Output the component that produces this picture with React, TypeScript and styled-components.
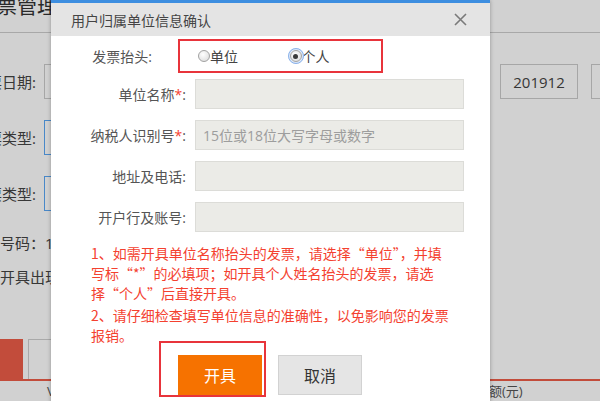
import React from 'react';
import styled, { createGlobalStyle } from 'styled-components';

const GlobalStyle = createGlobalStyle`
  html, body {
    margin: 0;
    padding: 0;
  }
  body {
    width: 600px;
    height: 401px;
    overflow: hidden;
    background: #fff;
    font-family: "Open Sans", "Noto Sans CJK SC", sans-serif;
  }
`;

const Screen = styled.div`
  position: relative;
  width: 600px;
  height: 401px;
  overflow: hidden;
  background: #fff;
`;

/* ---------- page behind the dialog ---------- */

const Page = styled.div`
  color: #444;
  font-size: 15px;
`;

const PageHeader = styled.div`
  height: 32px;
  border-bottom: 1px solid #cdcdcd;
  overflow: hidden;
`;

const PageTitle = styled.h1`
  margin: -6px 0 0 -23px;
  font-size: 20px;
  font-weight: normal;
  line-height: 26px;
  color: #333;
  white-space: nowrap;
`;

const FilterRow = styled.div<{ $top: number }>`
  display: flex;
  align-items: center;
  height: 35px;
  margin: ${(p) => p.$top}px 0 0 -100px;
`;

const FilterLabel = styled.span`
  flex: none;
  width: 136px;
  padding-right: 8px;
  text-align: right;
  white-space: nowrap;
`;

const FieldBox = styled.div<{ $width: number; $offset?: number; $accent?: boolean }>`
  flex: none;
  box-sizing: border-box;
  width: ${(p) => p.$width}px;
  height: 35px;
  margin-left: ${(p) => p.$offset ?? 0}px;
  border: 1px solid ${(p) => (p.$accent ? '#5aa6f5' : '#cbcbcb')};
  display: flex;
  align-items: center;
  justify-content: center;
  color: #444;
`;

const InfoLine = styled.div<{ $top: number; $shift: number }>`
  margin: ${(p) => p.$top}px 0 0 ${(p) => p.$shift}px;
  line-height: 20px;
  white-space: nowrap;
`;

const TabBar = styled.div`
  display: flex;
  align-items: flex-end;
  gap: 5px;
  height: 40px;
  margin-top: 52px;
  border-bottom: 2px solid #ed5d48;
`;

const Tab = styled.div<{ $active?: boolean; $width: number }>`
  box-sizing: border-box;
  width: ${(p) => p.$width}px;
  height: 40px;
  background: ${(p) => (p.$active ? '#ed5d48' : '#fff')};
  border: 1px solid ${(p) => (p.$active ? '#ed5d48' : '#cfcfcf')};
  border-bottom: none;
`;

const TableHead = styled.div`
  display: flex;
  height: 19px;
  align-items: center;
  font-size: 13px;
  color: #555;
`;

const HeadCell = styled.span<{ $width: number }>`
  flex: none;
  width: ${(p) => p.$width}px;
  white-space: nowrap;
`;

const Dim = styled.div`
  position: absolute;
  inset: 0;
  background: rgba(0, 0, 0, 0.18);
`;

/* ---------- dialog ---------- */

const Dialog = styled.div`
  position: absolute;
  left: 51px;
  top: 0;
  width: 439px;
  height: 430px;
  box-sizing: border-box;
  background: #fff;
  border-top: 3px solid #3d8ee0;
  box-shadow: 0 0 4px rgba(0, 0, 0, 0.3);
`;

const DialogHeader = styled.div`
  height: 33px;
  display: flex;
  align-items: center;
  justify-content: space-between;
  padding: 0 23px 0 20px;
  background: #e4e4e4;
  font-size: 14px;
  color: #444;
`;

const CloseButton = styled.button`
  width: 13px;
  height: 13px;
  padding: 0;
  border: none;
  background: none;
  display: flex;
  cursor: pointer;
`;

const DialogBody = styled.div`
  padding-top: 3px;
`;

const FormRow = styled.div<{ $bottom: number }>`
  display: flex;
  align-items: center;
  margin-bottom: ${(p) => p.$bottom}px;
`;

const FormLabel = styled.label<{ $width: number; $gap: number }>`
  flex: none;
  width: ${(p) => p.$width}px;
  margin-right: ${(p) => p.$gap}px;
  text-align: right;
  font-size: 14px;
  color: #555;
  white-space: nowrap;
`;

const Required = styled.span`
  color: #f4412f;
`;

const RadioGroup = styled.div`
  box-sizing: border-box;
  display: flex;
  align-items: center;
  width: 205px;
  height: 34px;
  padding-left: 18px;
  border: 2px solid #e8343b;
`;

const RadioOption = styled.label`
  display: flex;
  align-items: center;
  width: 110px;
  font-size: 14px;
  color: #444;
`;

const RadioDot = styled.span<{ $checked?: boolean }>`
  position: relative;
  box-sizing: border-box;
  width: 12px;
  height: 12px;
  border-radius: 50%;
  border: 1px solid #a2a2a2;
  background: radial-gradient(circle at 40% 35%, #fff 0%, #e4e4e4 70%, #d0d0d0 100%);
  outline: ${(p) => (p.$checked ? '1px solid #8db3ea' : 'none')};
  outline-offset: 1px;
  box-shadow: ${(p) => (p.$checked ? '0 0 0 2px #dbe8fa' : 'none')};
  &::after {
    content: '';
    display: ${(p) => (p.$checked ? 'block' : 'none')};
    position: absolute;
    left: 2.5px;
    top: 2.5px;
    width: 5px;
    height: 5px;
    border-radius: 50%;
    background: #3a3a3a;
  }
`;

const TextInput = styled.input`
  box-sizing: border-box;
  width: 269px;
  height: 30px;
  padding: 0 7px;
  border: 1px solid #dcdcd8;
  background: #ebebe7;
  font-family: inherit;
  font-size: 14px;
  color: #444;
  outline: none;
  &::placeholder {
    color: #9d9d9d;
  }
`;

const Hint = styled.div`
  margin: 8px 0 0 40px;
  font-family: "Noto Sans CJK SC", sans-serif;
  font-size: 14px;
  line-height: 20px;
  color: #f4412f;
  white-space: nowrap;
`;

const HintItem = styled.p<{ $gap?: number }>`
  margin: ${(p) => p.$gap ?? 0}px 0 0;
  height: 100%;
`;

const Footer = styled.div`
  display: flex;
  align-items: flex-start;
  margin: -4px 0 0 108px;
`;

const Highlight = styled.div`
  padding: 12px 2px 0 17px;
  border: 2px solid #e8343b;
`;

const ActionButton = styled.button<{ $primary?: boolean }>`
  box-sizing: border-box;
  width: 84px;
  height: 40px;
  margin-top: ${(p) => (p.$primary ? 0 : 14)}px;
  margin-left: ${(p) => (p.$primary ? 0 : 12)}px;
  border: 1px solid ${(p) => (p.$primary ? '#f67200' : '#d2d2d2')};
  background: ${(p) => (p.$primary ? '#f67200' : '#e5e5e5')};
  color: ${(p) => (p.$primary ? '#fff' : '#333')};
  font-family: inherit;
  font-size: 16px;
  cursor: pointer;
`;

const fields = [
  { label: '单位名称', required: true, placeholder: '' },
  { label: '纳税人识别号', required: true, placeholder: '15位或18位大写字母或数字' },
  { label: '地址及电话', required: false, placeholder: '' },
  { label: '开户行及账号', required: false, placeholder: '' },
];

const App: React.FC = () => {
  return (
    <Screen lang="zh-CN">
      <GlobalStyle />
      <Page>
        <PageHeader>
          <PageTitle>发票管理</PageTitle>
        </PageHeader>
        <FilterRow $top={31}>
          <FilterLabel>开票日期:</FilterLabel>
          <FieldBox $width={445} />
          <FieldBox $width={78} $offset={11}>201912</FieldBox>
          <FieldBox $width={78} $offset={13}>201912</FieldBox>
        </FilterRow>
        <FilterRow $top={21}>
          <FilterLabel>发票类型:</FilterLabel>
          <FieldBox $width={445} $accent />
        </FilterRow>
        <FilterRow $top={21}>
          <FilterLabel>开票类型:</FilterLabel>
          <FieldBox $width={445} $accent />
        </FilterRow>
        <InfoLine $top={22} $shift={-30}>发票号码：1</InfoLine>
        <InfoLine $top={14} $shift={0}>开具出现问题请联系客服</InfoLine>
        <TabBar>
          <Tab $active $width={23} />
          <Tab $width={120} />
        </TabBar>
        <TableHead>
          <HeadCell $width={47} />
          <HeadCell $width={429}>V</HeadCell>
          <HeadCell $width={110}>金额(元)</HeadCell>
        </TableHead>
      </Page>
      <Dim />

      <Dialog>
        <DialogHeader>
          <span>用户归属单位信息确认</span>
          <CloseButton aria-label="关闭">
            <svg width="13" height="13" viewBox="0 0 13 13">
              <path d="M1 1 L12 12 M12 1 L1 12" stroke="#7a7a7a" strokeWidth="1.6" />
            </svg>
          </CloseButton>
        </DialogHeader>
        <DialogBody>
          <FormRow $bottom={6}>
            <FormLabel $width={101} $gap={26}>发票抬头:</FormLabel>
            <RadioGroup>
              <RadioOption>
                <RadioDot />
                单位
              </RadioOption>
              <RadioOption>
                <RadioDot $checked />
                个人
              </RadioOption>
            </RadioGroup>
          </FormRow>
          {fields.map((f) => (
            <FormRow key={f.label} $bottom={11}>
              <FormLabel $width={135} $gap={9}>
                {f.label}
                {f.required && <Required>*</Required>}:
              </FormLabel>
              <TextInput placeholder={f.placeholder} disabled />
            </FormRow>
          ))}
          <Hint>
            <HintItem>
              1、如需开具单位名称抬头的发票，请选择“单位”，并填
              <br />
              写标“*”的必填项；如开具个人姓名抬头的发票，请选
              <br />
              择“个人”后直接开具。
            </HintItem>
            <HintItem $gap={2}>
              2、请仔细检查填写单位信息的准确性，以免影响您的发票
              <br />
              报销。
            </HintItem>
          </Hint>
          <Footer>
            <Highlight>
              <ActionButton $primary>开具</ActionButton>
            </Highlight>
            <ActionButton>取消</ActionButton>
          </Footer>
        </DialogBody>
      </Dialog>
    </Screen>
  );
};

export default App;
